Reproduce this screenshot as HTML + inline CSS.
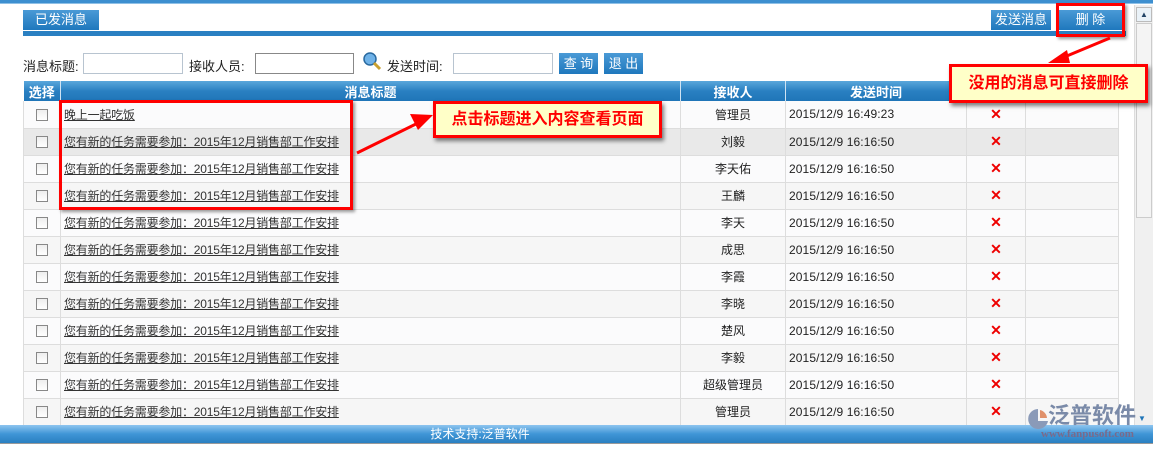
<!DOCTYPE html>
<html><head><meta charset="utf-8"><style>
*{margin:0;padding:0;box-sizing:border-box}
body{width:1153px;height:450px;position:relative;overflow:hidden;background:#fff;font-family:"Liberation Sans","Noto Sans CJK SC",sans-serif;font-size:12px;color:#222}
.a{position:absolute}
.btn{position:absolute;background:linear-gradient(#4a9ad6,#1f78bd);color:#fff;text-align:center;font-size:13px}
table{position:absolute;left:23px;top:81px;width:1095px;border-collapse:collapse;table-layout:fixed}
th{height:20px;background:linear-gradient(#5aa7db,#2a80c2 50%,#1f75b8);color:#fff;font-size:13px;font-weight:bold;border-left:1px solid #cfe3f3;text-align:center;padding:0}
td{height:27px;border:1px solid #ddd;border-top:0;padding:0;font-size:12px}
tr:nth-child(odd) td{background:#f6f6f6}
tr:nth-child(even) td{background:#fbfbfc}
tr.h td{background:#e9e9e9}
td.c{text-align:center}
.cb{display:inline-block;width:12px;height:12px;border:1px solid #888;background:linear-gradient(#eee,#fff);vertical-align:middle}
td.t{padding-left:3px;text-decoration:underline;color:#333;letter-spacing:-0.2px}
td.x{text-align:center;color:#e00;font-weight:bold;font-size:14px}
td.d{padding-left:3px;font-family:"Liberation Sans",sans-serif;font-size:12px;letter-spacing:0.1px}
.inp{position:absolute;height:21px;border:1px solid #b8c4d0;background:#fff}
.lbl{position:absolute;top:56px;font-size:13px}
.call{position:absolute;background:#ffffc8;border:3px solid #f00;color:#f00;font-weight:bold;font-size:16px;text-align:center;box-shadow:2px 3px 4px rgba(0,0,0,.5)}
</style></head><body>
<div class="a" style="left:0;top:0;width:1153px;height:4px;background:#3d8fd0;border-bottom:1px solid #8fc0e6"></div>
<div class="btn" style="left:23px;top:10px;width:76px;height:20px;line-height:20px">已发消息</div>
<div class="btn" style="left:991px;top:10px;width:60px;height:20px;line-height:20px">发送消息</div>
<div class="btn" style="left:1059px;top:10px;width:63px;height:20px;line-height:20px">删 除</div>
<div class="a" style="left:23px;top:31px;width:1103px;height:5px;background:#2a80c2"></div>
<div class="lbl" style="left:23px">消息标题:</div>
<div class="inp" style="left:83px;top:53px;width:100px"></div>
<div class="lbl" style="left:189px">接收人员:</div>
<div class="inp" style="left:255px;top:53px;width:99px;border-color:#888"></div>
<svg class="a" style="left:362px;top:51px" width="20" height="20"><circle cx="8" cy="8" r="6" fill="#6fb2e8" stroke="#2a6aa0" stroke-width="1.5"/><line x1="12" y1="12" x2="18" y2="18" stroke="#c9a030" stroke-width="3"/></svg>
<div class="lbl" style="left:387px">发送时间:</div>
<div class="inp" style="left:453px;top:53px;width:100px"></div>
<div class="btn" style="left:559px;top:53px;width:39px;height:21px;line-height:21px">查 询</div>
<div class="btn" style="left:604px;top:53px;width:39px;height:21px;line-height:21px">退 出</div>
<table>
<colgroup><col style="width:37px"><col style="width:620px"><col style="width:105px"><col style="width:181px"><col style="width:59px"><col style="width:93px"></colgroup>
<tr><th style="border-left:0">选择</th><th>消息标题</th><th>接收人</th><th>发送时间</th><th></th><th></th></tr>
<tr><td class="c"><span class="cb"></span></td><td class="t">晚上一起吃饭</td><td class="c">管理员</td><td class="d">2015/12/9 16:49:23</td><td class="x">✕</td><td></td></tr>
<tr class="h"><td class="c"><span class="cb"></span></td><td class="t">您有新的任务需要参加：2015年12月销售部工作安排</td><td class="c">刘毅</td><td class="d">2015/12/9 16:16:50</td><td class="x">✕</td><td></td></tr>
<tr><td class="c"><span class="cb"></span></td><td class="t">您有新的任务需要参加：2015年12月销售部工作安排</td><td class="c">李天佑</td><td class="d">2015/12/9 16:16:50</td><td class="x">✕</td><td></td></tr>
<tr><td class="c"><span class="cb"></span></td><td class="t">您有新的任务需要参加：2015年12月销售部工作安排</td><td class="c">王麟</td><td class="d">2015/12/9 16:16:50</td><td class="x">✕</td><td></td></tr>
<tr><td class="c"><span class="cb"></span></td><td class="t">您有新的任务需要参加：2015年12月销售部工作安排</td><td class="c">李天</td><td class="d">2015/12/9 16:16:50</td><td class="x">✕</td><td></td></tr>
<tr><td class="c"><span class="cb"></span></td><td class="t">您有新的任务需要参加：2015年12月销售部工作安排</td><td class="c">成思</td><td class="d">2015/12/9 16:16:50</td><td class="x">✕</td><td></td></tr>
<tr><td class="c"><span class="cb"></span></td><td class="t">您有新的任务需要参加：2015年12月销售部工作安排</td><td class="c">李霞</td><td class="d">2015/12/9 16:16:50</td><td class="x">✕</td><td></td></tr>
<tr><td class="c"><span class="cb"></span></td><td class="t">您有新的任务需要参加：2015年12月销售部工作安排</td><td class="c">李晓</td><td class="d">2015/12/9 16:16:50</td><td class="x">✕</td><td></td></tr>
<tr><td class="c"><span class="cb"></span></td><td class="t">您有新的任务需要参加：2015年12月销售部工作安排</td><td class="c">楚风</td><td class="d">2015/12/9 16:16:50</td><td class="x">✕</td><td></td></tr>
<tr><td class="c"><span class="cb"></span></td><td class="t">您有新的任务需要参加：2015年12月销售部工作安排</td><td class="c">李毅</td><td class="d">2015/12/9 16:16:50</td><td class="x">✕</td><td></td></tr>
<tr><td class="c"><span class="cb"></span></td><td class="t">您有新的任务需要参加：2015年12月销售部工作安排</td><td class="c">超级管理员</td><td class="d">2015/12/9 16:16:50</td><td class="x">✕</td><td></td></tr>
<tr><td class="c"><span class="cb"></span></td><td class="t">您有新的任务需要参加：2015年12月销售部工作安排</td><td class="c">管理员</td><td class="d">2015/12/9 16:16:50</td><td class="x">✕</td><td></td></tr>
</table>
<div class="a" style="left:1134px;top:5px;width:19px;height:420px;background:#f0f0f0;border-left:1px solid #ddd"></div>
<div class="a" style="left:1136px;top:7px;width:16px;height:15px;background:#eaf2f8;border:1px solid #bbb;color:#246;font-size:8px;text-align:center;line-height:13px">▲</div>
<div class="a" style="left:1136px;top:23px;width:16px;height:195px;background:#f4f4f4;border:1px solid #ccc"></div>
<div class="a" style="left:0;top:425px;width:1153px;height:18px;background:linear-gradient(#8ec5ef,#3f95d6 50%,#2a7fc0)"></div>
<div class="a" style="left:380px;top:425px;width:200px;color:#fff;text-align:center;font-size:12px;line-height:18px">技术支持:泛普软件</div>
<div class="a" style="left:0;top:443px;width:1153px;height:7px;background:#fff;border-top:1px solid #999"></div>
<svg class="a" style="left:1026px;top:407px" width="24" height="24"><path d="M12 2 A10 10 0 1 0 22 14 L12 14 Z" fill="#8a9ab8"/><path d="M14 3 A9 9 0 0 1 21 11 L14 11Z" fill="#e0906a"/></svg>
<div class="a" style="left:1048px;top:405px;width:100px;text-align:left;color:#7a8aa8;font-size:22px;font-weight:bold;line-height:22px">泛普软件</div>
<div class="a" style="left:1025px;top:428px;width:125px;text-align:center;color:#7a6a8a;font-size:11px;font-weight:bold;font-family:'Liberation Serif',serif">www.fanpusoft.com</div>
<div class="a" style="left:1138px;top:414px;color:#1f75b8;font-size:8px">▼</div>
<!-- annotations -->
<div class="a" style="left:59px;top:100px;width:294px;height:110px;border:3px solid #f00;box-shadow:2px 2px 3px rgba(0,0,0,.4)"></div>
<div class="a" style="left:1056px;top:3px;width:69px;height:34px;border:3px solid #f00;box-shadow:2px 2px 3px rgba(0,0,0,.4)"></div>
<div class="call" style="left:433px;top:101px;width:229px;height:37px;line-height:31px">点击标题进入内容查看页面</div>
<div class="call" style="left:949px;top:64px;width:199px;height:39px;line-height:33px">没用的消息可直接删除</div>
<svg class="a" style="left:0;top:0" width="1153" height="450">
<line x1="357" y1="153" x2="420" y2="122" stroke="#f00" stroke-width="3"/>
<polygon points="433,115 410,114 418,130" fill="#f00"/>
<line x1="1110" y1="38" x2="1062" y2="58" stroke="#f00" stroke-width="3"/>
<polygon points="1048,63 1067,50 1070,63" fill="#f00"/>
</svg>
</body></html>
